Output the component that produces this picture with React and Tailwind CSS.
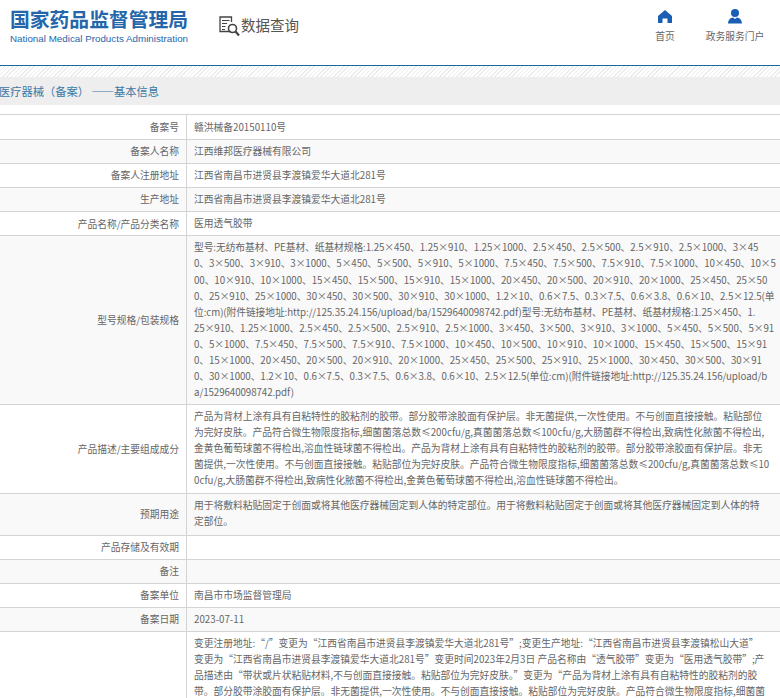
const font = "font-['Noto_Sans_CJK_SC','Noto_Sans',sans-serif]";

const specLines = [
  "型号:无纺布基材、PE基材、纸基材规格:1.25×450、1.25×910、1.25×1000、2.5×450、2.5×500、2.5×910、2.5×1000、3×45",
  "0、3×500、3×910、3×1000、5×450、5×500、5×910、5×1000、7.5×450、7.5×500、7.5×910、7.5×1000、10×450、10×5",
  "00、10×910、10×1000、15×450、15×500、15×910、15×1000、20×450、20×500、20×910、20×1000、25×450、25×50",
  "0、25×910、25×1000、30×450、30×500、30×910、30×1000、1.2×10、0.6×7.5、0.3×7.5、0.6×3.8、0.6×10、2.5×12.5(单",
  "位:cm)(附件链接地址:http://125.35.24.156/upload/ba/1529640098742.pdf)型号:无纺布基材、PE基材、纸基材规格:1.25×450、1.",
  "25×910、1.25×1000、2.5×450、2.5×500、2.5×910、2.5×1000、3×450、3×500、3×910、3×1000、5×450、5×500、5×91",
  "0、5×1000、7.5×450、7.5×500、7.5×910、7.5×1000、10×450、10×500、10×910、10×1000、15×450、15×500、15×91",
  "0、15×1000、20×450、20×500、20×910、20×1000、25×450、25×500、25×910、25×1000、30×450、30×500、30×91",
  "0、30×1000、1.2×10、0.6×7.5、0.3×7.5、0.6×3.8、0.6×10、2.5×12.5(单位:cm)(附件链接地址:http://125.35.24.156/upload/b",
  "a/1529640098742.pdf)",
];

const descLines = [
  "产品为背材上涂有具有自粘特性的胶粘剂的胶带。部分胶带涂胶面有保护层。非无菌提供,一次性使用。不与创面直接接触。粘贴部位",
  "为完好皮肤。产品符合微生物限度指标,细菌菌落总数≤200cfu/g,真菌菌落总数≤100cfu/g,大肠菌群不得检出,致病性化脓菌不得检出,",
  "金黄色葡萄球菌不得检出,溶血性链球菌不得检出。产品为背材上涂有具有自粘特性的胶粘剂的胶带。部分胶带涂胶面有保护层。非无",
  "菌提供,一次性使用。不与创面直接接触。粘贴部位为完好皮肤。产品符合微生物限度指标,细菌菌落总数≤200cfu/g,真菌菌落总数≤10",
  "0cfu/g,大肠菌群不得检出,致病性化脓菌不得检出,金黄色葡萄球菌不得检出,溶血性链球菌不得检出。",
];

const useLines = [
  "用于将敷料粘贴固定于创面或将其他医疗器械固定到人体的特定部位。用于将敷料粘贴固定于创面或将其他医疗器械固定到人体的特",
  "定部位。",
];

// the row runs on below the fold, which is why its label isn't visible
const changeLines = [
  "变更注册地址:“/”变更为“江西省南昌市进贤县李渡镇爱华大道北281号”;变更生产地址:“江西省南昌市进贤县李渡镇松山大道”",
  "变更为“江西省南昌市进贤县李渡镇爱华大道北281号”变更时间2023年2月3日 产品名称由“透气胶带”变更为“医用透气胶带”;产",
  "品描述由“带状或片状粘贴材料,不与创面直接接触。粘贴部位为完好皮肤。”变更为“产品为背材上涂有具有自粘特性的胶粘剂的胶",
  "带。部分胶带涂胶面有保护层。非无菌提供,一次性使用。不与创面直接接触。粘贴部位为完好皮肤。产品符合微生物限度指标,细菌菌",
  "落总数≤200cfu/g,真菌菌落总数≤100cfu/g,大肠菌群不得检出,致病性化脓菌不得检出,金黄色葡萄球菌不得检出,",
  "溶血性链球菌不得检出。产品为背材上涂有具有自粘特性的胶粘剂的胶带。部分胶带涂胶面有保护层。非无菌提供,",
  "一次性使用。不与创面直接接触。粘贴部位为完好皮肤。",
  "产品符合微生物限度指标,细菌菌落总数≤200cfu/g,真菌菌落总数≤100cfu/g,",
  "大肠菌群不得检出,致病性化脓菌不得检出,",
  "金黄色葡萄球菌不得检出,溶血性链球菌不得检出。”",
];

const rows = [
  ["备案号", ["赣洪械备20150110号"], "pt-[5px]"],
  ["备案人名称", ["江西维邦医疗器械有限公司"]],
  ["备案人注册地址", ["江西省南昌市进贤县李渡镇爱华大道北281号"]],
  ["生产地址", ["江西省南昌市进贤县李渡镇爱华大道北281号"]],
  ["产品名称/产品分类名称", ["医用透气胶带"]],
  ["型号规格/包装规格", specLines, "tracking-[-0.08px]"],
  ["产品描述/主要组成成分", descLines],
  ["预期用途", useLines, "pb-[5px]"],
  ["产品存储及有效期", [""]],
  ["备注", [""]],
  ["备案单位", ["南昌市市场监督管理局"]],
  ["备案日期", ["2023-07-11"]],
  ["变更情况", changeLines],
];

function Row({ label, lines, striped, extra }) {
  return (
    <div className={`flex border-b border-[#d4d4d4] ${striped ? "bg-[#f9f9f9]" : "bg-white"}`}>
      <div className="w-[187px] shrink-0 flex items-center justify-end pr-[7px] border-r border-[#d4d4d4]">
        {label}
      </div>
      <div className={`flex-1 min-w-0 pl-[7px] pt-[4px] pb-[3px] ${extra || ""}`}>
        {lines.map((line, i) => (
          <div key={i} className="h-[16.08px] leading-[15px] whitespace-nowrap">{line}</div>
        ))}
      </div>
    </div>
  );
}

export default function App() {
  return (
    <div lang="zh-CN" className={`h-screen overflow-hidden bg-white text-[9.75px] text-[#666] ${font}`}>
      <header className="h-[66px] flex border-b border-[#15699b]">
        <div className="ml-[10px] mt-[6px] w-[178px]">
          <div className="text-[19.8px] leading-[26px] font-bold text-[#2566ab] whitespace-nowrap">国家药品监督管理局</div>
          <div className="text-[9.8px] leading-[13px] text-[#2566ab] whitespace-nowrap font-['Liberation_Sans',sans-serif]">National Medical Products Administration</div>
        </div>
        <div className="ml-[31px] mt-[15px] flex items-start h-[24px]">
          <svg width="21" height="22" viewBox="0 0 21 22" fill="none" stroke="#444" className="mt-[1px]">
            <path d="M12 15.5H1V1h11.5v5" strokeWidth="1.3" />
            <path d="M3 4.5h7.5M3 7.5h5M3 10.5h3.5M3 13.5h3" strokeWidth="1" />
            <circle cx="13.5" cy="12.5" r="4" strokeWidth="1.6" />
            <path d="M16.5 15.5l3.5 4" strokeWidth="2.2" />
          </svg>
          <span className="text-[14.5px] leading-[20px] text-[#555] ml-[1px]">数据查询</span>
        </div>
        <nav className="ml-auto mr-[15px] flex">
          <div className="w-[40px] mr-[20px] mt-[10px] flex flex-col items-center">
            <svg width="14" height="13" viewBox="0 0 14 13" fill="#1a5fb4">
              <path d="M7 0L14 6V13H9.5V8.5H4.5V13H0V6Z" />
            </svg>
            <span className="mt-[5px] leading-[16px]">首页</span>
          </div>
          <div className="w-[60px] mt-[9px] flex flex-col items-center">
            <svg width="14" height="15" viewBox="0 0 14 15" fill="#1a5fb4">
              <circle cx="7" cy="4" r="4" />
              <path d="M0 14.5C0 11 2.5 8.8 5 8.5L7 10L9 8.5C11.5 8.8 14 11 14 14.5Z" />
            </svg>
            <span className="mt-[4px] leading-[16px] whitespace-nowrap">政务服务门户</span>
          </div>
        </nav>
      </header>
      <div className="h-[11px] bg-[repeating-linear-gradient(135deg,#ececec_0,#ececec_1px,#fff_1px,#fff_3px)]" />
      <div className="h-[28px] bg-[#eeeeee] leading-[29px] text-[#3a78a6] text-[11.25px] -indent-px whitespace-nowrap">医疗器械（备案） ——基本信息</div>
      <div className="mt-[9px] border-t border-[#d4d4d4]">
        {rows.map(([label, lines, extra], i) => (
          <Row key={label} label={label} lines={lines} striped={i % 2 === 1} extra={extra} />
        ))}
      </div>
    </div>
  );
}
